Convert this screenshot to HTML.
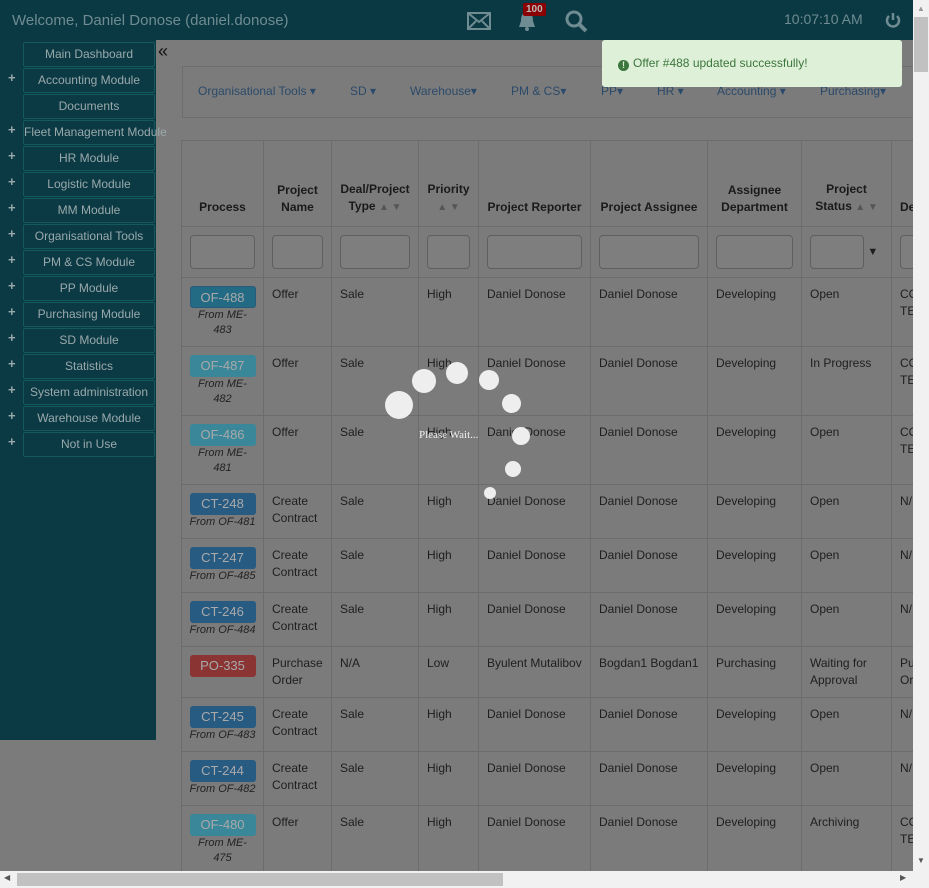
<!DOCTYPE html>
<html><head><meta charset="utf-8"><style>
*{box-sizing:border-box;margin:0;padding:0}
body{width:929px;height:888px;overflow:hidden;background:#7b7b7b;font-family:"Liberation Sans",sans-serif;font-size:12px;color:#1e1e1e;position:relative}
.hdr{position:absolute;left:0;top:0;width:913px;height:40px;background:#0a3843}
.hdr .w{position:absolute;left:12px;top:12px;font-size:15px;color:#6f8c92}
.hdr .t{position:absolute;left:784px;top:11px;font-size:14px;color:#6f8c92}
.side{position:absolute;left:0;top:40px;width:156px;height:700px;background:#0b3a45}
.side .b{position:absolute;left:23px;width:132px;height:25px;border:1px solid #14595c;border-radius:2px;color:#9aa9ab;font-size:12px;text-align:center;line-height:23px;white-space:nowrap}
.side .p{position:absolute;left:8px;color:#9aa9ab;font-size:13px;font-weight:bold}
.nav{position:absolute;left:182px;top:66px;width:740px;height:52px;border:1px solid #6e6e6e;border-right:none}
.nav span{position:absolute;top:17px;color:#2b4a6a;font-size:12px}
.tw{position:absolute;left:181px;top:140px;width:732px;height:731px;overflow:hidden}
table{border-collapse:collapse;table-layout:fixed;width:820px}
td,th{border:1px solid #6c6c6c;vertical-align:top;padding:8px;font-size:12px;line-height:17px}
td:first-child{padding:8px 0}
th{vertical-align:bottom;text-align:center;font-weight:bold;color:#1a1a1a;padding-bottom:10px}
.f td{height:51px;vertical-align:middle;padding:8px}
.in{height:34px;border:1px solid #5f5f5f;border-radius:4px;background:#7e7e7e}
.bd{display:block;width:66px;height:22px;margin:0 auto;border-radius:3px;color:#a9a9a9;font-size:13px;text-align:center;line-height:22px}
.fr{display:block;text-align:center;font-style:italic;font-size:11px;line-height:15px;color:#222;white-space:nowrap}
.o1{background:#236a84;border:1px solid #2a5a7a}.o{background:#3a8799}.c{background:#285b82}.po{background:#8a3434}
.ar{color:#555;font-size:10px}
.toast{position:absolute;left:602px;top:40px;width:300px;height:47px;background:#dff0d8;border-radius:3px;color:#3c763d;font-size:12px;line-height:47px;padding-left:16px}
.toast i{display:inline-block;width:11px;height:11px;border-radius:50%;background:#3c763d;color:#dff0d8;font-size:9px;line-height:11px;text-align:center;font-style:normal;font-weight:bold;vertical-align:-1px;margin-right:4px}
.dot{position:absolute;border-radius:50%;background:#eee}
.vs{position:absolute;left:913px;top:0;width:16px;height:871px;background:#f1f1f1}
.hs{position:absolute;left:0;top:871px;width:929px;height:17px;background:#f1f1f1}
</style></head><body>
<div class="hdr"><div class="w">Welcome, Daniel Donose (daniel.donose)</div>
<svg style="position:absolute;left:467px;top:12px" width="24" height="18"><rect x="1" y="1" width="22" height="16" fill="none" stroke="#6f8c92" stroke-width="2"/><path d="M1 1L12 10L23 1M1 17L9 9M23 17L15 9" stroke="#6f8c92" stroke-width="2" fill="none"/></svg>
<svg style="position:absolute;left:516px;top:9px" width="22" height="24"><path d="M11 3C6 3 5 8 5 12L3 18H19L17 12C17 8 16 3 11 3Z" fill="#6f8c92"/><circle cx="11" cy="20" r="2" fill="#6f8c92"/></svg>
<div style="position:absolute;left:523px;top:3px;background:#8b0000;color:#bbb;font-size:10px;font-weight:bold;padding:0 3px;border-radius:2px;line-height:13px">100</div>
<svg style="position:absolute;left:564px;top:9px" width="24" height="24"><circle cx="10" cy="10" r="7" fill="none" stroke="#6f8c92" stroke-width="3"/><path d="M15 15L22 22" stroke="#6f8c92" stroke-width="4"/></svg>
<div class="t">10:07:10 AM</div>
<svg style="position:absolute;left:885px;top:11px" width="16" height="18"><path d="M4 5A6 6 0 1 0 12 5" fill="none" stroke="#6f8c92" stroke-width="2.5"/><path d="M8 2V9" stroke="#6f8c92" stroke-width="2.5"/></svg>
</div>
<div class="side">
<div class="b" style="top:2px">Main Dashboard</div>
<div class="p" style="top:30px">+</div><div class="b" style="top:28px">Accounting Module</div>
<div class="b" style="top:54px">Documents</div>
<div class="p" style="top:82px">+</div><div class="b" style="top:80px;overflow:visible">Fleet Management Module</div>
<div class="p" style="top:108px">+</div><div class="b" style="top:106px">HR Module</div>
<div class="p" style="top:134px">+</div><div class="b" style="top:132px">Logistic Module</div>
<div class="p" style="top:160px">+</div><div class="b" style="top:158px">MM Module</div>
<div class="p" style="top:186px">+</div><div class="b" style="top:184px">Organisational Tools</div>
<div class="p" style="top:212px">+</div><div class="b" style="top:210px">PM &amp; CS Module</div>
<div class="p" style="top:238px">+</div><div class="b" style="top:236px">PP Module</div>
<div class="p" style="top:264px">+</div><div class="b" style="top:262px">Purchasing Module</div>
<div class="p" style="top:290px">+</div><div class="b" style="top:288px">SD Module</div>
<div class="p" style="top:316px">+</div><div class="b" style="top:314px">Statistics</div>
<div class="p" style="top:342px">+</div><div class="b" style="top:340px">System administration</div>
<div class="p" style="top:368px">+</div><div class="b" style="top:366px">Warehouse Module</div>
<div class="p" style="top:394px">+</div><div class="b" style="top:392px">Not in Use</div>
</div>
<div style="position:absolute;left:158px;top:41px;font-size:18px;color:#111">«</div>
<div class="nav">
<span style="left:15px">Organisational Tools ▾</span><span style="left:167px">SD ▾</span><span style="left:227px">Warehouse▾</span><span style="left:328px">PM &amp; CS▾</span><span style="left:418px">PP▾</span><span style="left:474px">HR ▾</span><span style="left:534px">Accounting ▾</span><span style="left:637px">Purchasing▾</span>
</div>
<div class="tw"><table>
<colgroup><col style="width:82px"><col style="width:68px"><col style="width:87px"><col style="width:60px"><col style="width:112px"><col style="width:117px"><col style="width:94px"><col style="width:90px"><col style="width:110px"></colgroup>
<tr style="height:86px"><th>Process</th><th>Project Name</th><th>Deal/Project Type <span class="ar">▲ ▼</span></th><th>Priority<br><span class="ar">▲ ▼</span></th><th>Project Reporter</th><th>Project Assignee</th><th>Assignee Department</th><th>Project Status <span class="ar">▲ ▼</span></th><th style="text-align:left">Del</th></tr>
<tr class="f"><td style="padding:8px"><div class="in"></div></td><td><div class="in"></div></td><td><div class="in"></div></td><td><div class="in"></div></td><td><div class="in"></div></td><td><div class="in"></div></td><td><div class="in"></div></td><td><div class="in" style="width:54px;display:inline-block;vertical-align:middle"></div> <span style="font-size:11px">▼</span></td><td><div class="in"></div></td></tr>
<tr style="height:69px"><td><span class="bd o1">OF-488</span><span class="fr">From ME-<br>483</span></td><td>Offer</td><td>Sale</td><td>High</td><td>Daniel Donose</td><td>Daniel Donose</td><td>Developing</td><td>Open</td><td>CO<br>TE</td></tr>
<tr style="height:69px"><td><span class="bd o">OF-487</span><span class="fr">From ME-<br>482</span></td><td>Offer</td><td>Sale</td><td>High</td><td>Daniel Donose</td><td>Daniel Donose</td><td>Developing</td><td>In Progress</td><td>CO<br>TE</td></tr>
<tr style="height:69px"><td><span class="bd o">OF-486</span><span class="fr">From ME-<br>481</span></td><td>Offer</td><td>Sale</td><td>High</td><td>Daniel Donose</td><td>Daniel Donose</td><td>Developing</td><td>Open</td><td>CO<br>TE</td></tr>
<tr style="height:54px"><td><span class="bd c">CT-248</span><span class="fr">From OF-481</span></td><td>Create Contract</td><td>Sale</td><td>High</td><td>Daniel Donose</td><td>Daniel Donose</td><td>Developing</td><td>Open</td><td>N/</td></tr>
<tr style="height:54px"><td><span class="bd c">CT-247</span><span class="fr">From OF-485</span></td><td>Create Contract</td><td>Sale</td><td>High</td><td>Daniel Donose</td><td>Daniel Donose</td><td>Developing</td><td>Open</td><td>N/</td></tr>
<tr style="height:54px"><td><span class="bd c">CT-246</span><span class="fr">From OF-484</span></td><td>Create Contract</td><td>Sale</td><td>High</td><td>Daniel Donose</td><td>Daniel Donose</td><td>Developing</td><td>Open</td><td>N/</td></tr>
<tr style="height:51px"><td><span class="bd po">PO-335</span></td><td>Purchase Order</td><td>N/A</td><td>Low</td><td>Byulent Mutalibov</td><td>Bogdan1 Bogdan1</td><td>Purchasing</td><td>Waiting for Approval</td><td>Pu<br>Or</td></tr>
<tr style="height:54px"><td><span class="bd c">CT-245</span><span class="fr">From OF-483</span></td><td>Create Contract</td><td>Sale</td><td>High</td><td>Daniel Donose</td><td>Daniel Donose</td><td>Developing</td><td>Open</td><td>N/</td></tr>
<tr style="height:54px"><td><span class="bd c">CT-244</span><span class="fr">From OF-482</span></td><td>Create Contract</td><td>Sale</td><td>High</td><td>Daniel Donose</td><td>Daniel Donose</td><td>Developing</td><td>Open</td><td>N/</td></tr>
<tr style="height:69px"><td><span class="bd o">OF-480</span><span class="fr">From ME-<br>475</span></td><td>Offer</td><td>Sale</td><td>High</td><td>Daniel Donose</td><td>Daniel Donose</td><td>Developing</td><td>Archiving</td><td>CO<br>TE</td></tr>
</table></div>
<div class="toast"><i>!</i>Offer #488 updated successfully!</div>
<div class="dot" style="left:385px;top:391px;width:28px;height:28px"></div>
<div class="dot" style="left:412px;top:369px;width:24px;height:24px"></div>
<div class="dot" style="left:446px;top:362px;width:22px;height:22px"></div>
<div class="dot" style="left:479px;top:370px;width:20px;height:20px"></div>
<div class="dot" style="left:502px;top:394px;width:19px;height:19px"></div>
<div class="dot" style="left:512px;top:427px;width:18px;height:18px"></div>
<div class="dot" style="left:505px;top:461px;width:16px;height:16px"></div>
<div class="dot" style="left:484px;top:487px;width:12px;height:12px"></div>
<div style="position:absolute;left:419px;top:429px;color:#eee;font-family:'Liberation Serif',serif;font-size:11px">Please Wait...</div>
<div class="vs"><div style="position:absolute;left:1px;top:17px;width:14px;height:55px;background:#c1c1c1"></div><div style="position:absolute;left:4px;top:4px;font-size:8px;color:#999">▲</div><div style="position:absolute;left:4px;top:856px;font-size:8px;color:#555">▼</div></div>
<div class="hs"><div style="position:absolute;left:17px;top:2px;width:486px;height:13px;background:#c1c1c1"></div><div style="position:absolute;left:4px;top:2px;font-size:8px;color:#555">◀</div><div style="position:absolute;left:900px;top:2px;font-size:8px;color:#555">▶</div></div>
</body></html>
